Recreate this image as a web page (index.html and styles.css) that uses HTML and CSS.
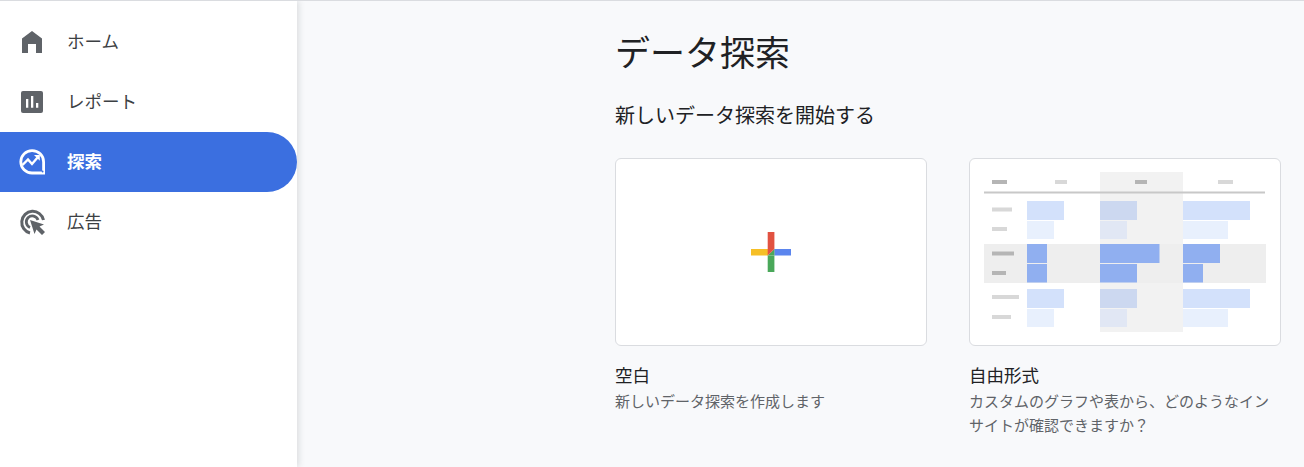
FILE: index.html
```html
<!DOCTYPE html>
<html lang="ja">
<head>
    <meta charset="UTF-8">
    <title>データ探索</title>
    <link rel="stylesheet" href="styles.css">
</head>
<body>
    <div id="page">
        <nav id="side">
            <a class="item">
                <svg class="ico" viewBox="0 0 26 26"><path fill="#5f6368" d="M13 2 L23 9.500 V24 H17 V15 H9 V24 H3 V9.500 Z"/></svg>
                <span>ホーム</span>
            </a>
            <a class="item">
                <svg class="ico" viewBox="0 0 26 26"><rect x="2" y="2" width="22" height="22" rx="2" fill="#5f6368"/><path fill="#fff" d="M7 10h2.300v8.700H7zM12 7h2.300v11.700H12zM17 14h2.300v4.700H17z"/></svg>
                <span>レポート</span>
            </a>
            <a class="item active">
                <svg class="ico" viewBox="0 0 26 26"><path fill="none" stroke="#fff" stroke-width="2.800" d="M13 1.600 A11.200 11.200 0 1 0 13 24 H24.600 V13 A11.400 11.400 0 0 0 13 1.600 Z"/><path fill="none" stroke="#fff" stroke-width="2.400" d="M3.500 16 L9 10.500 L13 15 L19 8"/><path fill="#fff" d="M15 6h5.800v5.800z"/><circle cx="23.600" cy="22.500" r="0.900" fill="#3b6fe0"/></svg>
                <span>探索</span>
            </a>
            <a class="item">
                <svg class="ico" viewBox="0 0 26 26"><path fill="none" stroke="#5f6368" stroke-width="3" d="M11 24 A11 11 0 1 1 24.500 11"/><path fill="none" stroke="#5f6368" stroke-width="2.800" d="M11 18.500 A6 6 0 1 1 19 11"/><path fill="#5f6368" d="M11 11 L25 15.500 L20.500 17.500 L26 23 L23 26 L17.500 20.500 L15.500 25 Z"/></svg>
                <span>広告</span>
            </a>
        </nav>
        <main id="main">
            <h1>データ探索</h1>
            <h2>新しいデータ探索を開始する</h2>
            <div id="cards">
                <div class="card">
                    <div class="thumb plus">
                        <svg width="40" height="40" viewBox="0 0 40 40">
                            <rect x="0" y="17" width="17" height="6.500" fill="#f6bf26"/>
                            <rect x="16.700" y="0" width="6.700" height="17" fill="#e15241"/>
                            <rect x="23.300" y="17" width="16.700" height="6.500" fill="#5b85ee"/>
                            <rect x="16.700" y="23.500" width="6.700" height="16.500" fill="#4aa85a"/>
                            <path d="M16.700 23.500 L23.400 17 V23.500 Z" fill="#4aa85a"/>
                            <path d="M16.700 23.500 L23.400 17 H16.700 Z" fill="#e15241"/>
                        </svg>
                    </div>
                    <h3>空白</h3>
                    <p>新しいデータ探索を作成します</p>
                </div>
                <div class="card">
                    <div class="thumb">
                        <!-- 表のイメージ -->
                        <svg width="310" height="186" viewBox="0 0 310 186">
                            <rect x="130" y="13" width="83" height="160" fill="#f2f2f2"/>
                            <rect x="14" y="85" width="282" height="39" fill="#eeeeee"/>
                            <rect x="14" y="32.500" width="281" height="2" fill="#c8c8c8"/>
                            <g fill="#b5b5b5">
                                <rect x="22" y="21" width="15" height="4"/>
                                <rect x="165" y="21" width="12" height="4"/>
                                <rect x="22" y="92.500" width="22" height="4"/>
                                <rect x="22" y="112" width="14" height="4"/>
                            </g>
                            <g fill="#d8d8d8">
                                <rect x="85" y="21" width="12" height="4"/>
                                <rect x="248" y="21" width="15" height="4"/>
                                <rect x="22" y="48.500" width="20" height="4"/>
                                <rect x="22" y="68" width="15" height="4"/>
                                <rect x="22" y="136" width="27" height="4"/>
                                <rect x="22" y="156" width="19" height="4"/>
                            </g>
                            <g fill="#d3e1fb">
                                <rect x="57" y="42" width="37" height="19"/>
                                <rect x="213" y="42" width="67" height="19"/>
                                <rect x="57" y="130" width="37" height="19"/>
                                <rect x="213" y="130" width="67" height="19"/>
                            </g>
                            <g fill="#ccd8f0">
                                <rect x="130" y="42" width="37" height="19"/>
                                <rect x="130" y="130" width="37" height="19"/>
                            </g>
                            <g fill="#e8f0fd">
                                <rect x="57" y="62" width="27" height="18"/>
                                <rect x="213" y="62" width="45" height="18"/>
                                <rect x="57" y="150" width="27" height="18"/>
                                <rect x="213" y="150" width="45" height="18"/>
                            </g>
                            <g fill="#e1e7f4">
                                <rect x="130" y="62" width="27" height="18"/>
                                <rect x="130" y="150" width="27" height="18"/>
                            </g>
                            <g fill="#90aff0">
                                <rect x="57" y="85" width="20" height="19"/>
                                <rect x="130" y="85" width="59.500" height="19"/>
                                <rect x="213" y="85" width="37" height="19"/>
                                <rect x="57" y="105" width="20" height="18.500"/>
                                <rect x="130" y="105" width="37" height="18.500"/>
                                <rect x="213" y="105" width="20" height="18.500"/>
                            </g>
                        </svg>
                    </div>
                    <h3>自由形式</h3>
                    <p>カスタムのグラフや表から、どのようなインサイトが確認できますか？</p>
                </div>
            </div>
        </main>
    </div>
</body>
</html>
```

FILE: styles.css
```css
* {
    margin: 0;
    padding: 0;
    box-sizing: border-box;
}

html, body {
    height: 100%;
    overflow: hidden;
}

body {
    font-family: "Roboto", "Noto Sans CJK JP", sans-serif;
    background: #f8f9fb;
    color: #202124;
    border-top: 1px solid #dadce0;
}

#page {
    display: flex;
    height: 100%;
}

#side {
    width: 297px;
    flex-shrink: 0;
    padding-top: 11px;
    background: #ffffff;
    box-shadow: 2px 0 6px rgba(60, 64, 67, 0.15);
}

.item {
    display: flex;
    align-items: center;
    height: 60px;
    padding-left: 19px;
    gap: 22px;
    font-size: 17.500px;
    line-height: 24px;
    font-weight: 400;
    color: #3c4043;
}

.item.active {
    background: #3b6fe0;
    color: #ffffff;
    font-weight: 700;
    border-radius: 0 30px 30px 0;
}

.ico {
    width: 26px;
    height: 26px;
}

#main {
    padding: 29px 0 0 318px;
}

h1 {
    font-size: 35px;
    font-weight: 400;
    line-height: 50px;
}

h2 {
    margin-top: 21px;
    font-size: 20px;
    font-weight: 400;
    line-height: 30px;
}

#cards {
    display: flex;
    gap: 42px;
    margin-top: 27px;
}

.card {
    width: 312px;
}

.thumb {
    height: 188px;
    background: #ffffff;
    border: 1px solid #dadce0;
    border-radius: 6px;
    overflow: hidden;
}

.thumb svg {
    display: block;
}

.plus {
    display: flex;
    align-items: center;
    justify-content: center;
}

h3 {
    margin-top: 17px;
    font-size: 17.500px;
    font-weight: 400;
    line-height: 27px;
}

.card p {
    font-size: 15px;
    line-height: 24px;
    color: #5f6368;
}
```
